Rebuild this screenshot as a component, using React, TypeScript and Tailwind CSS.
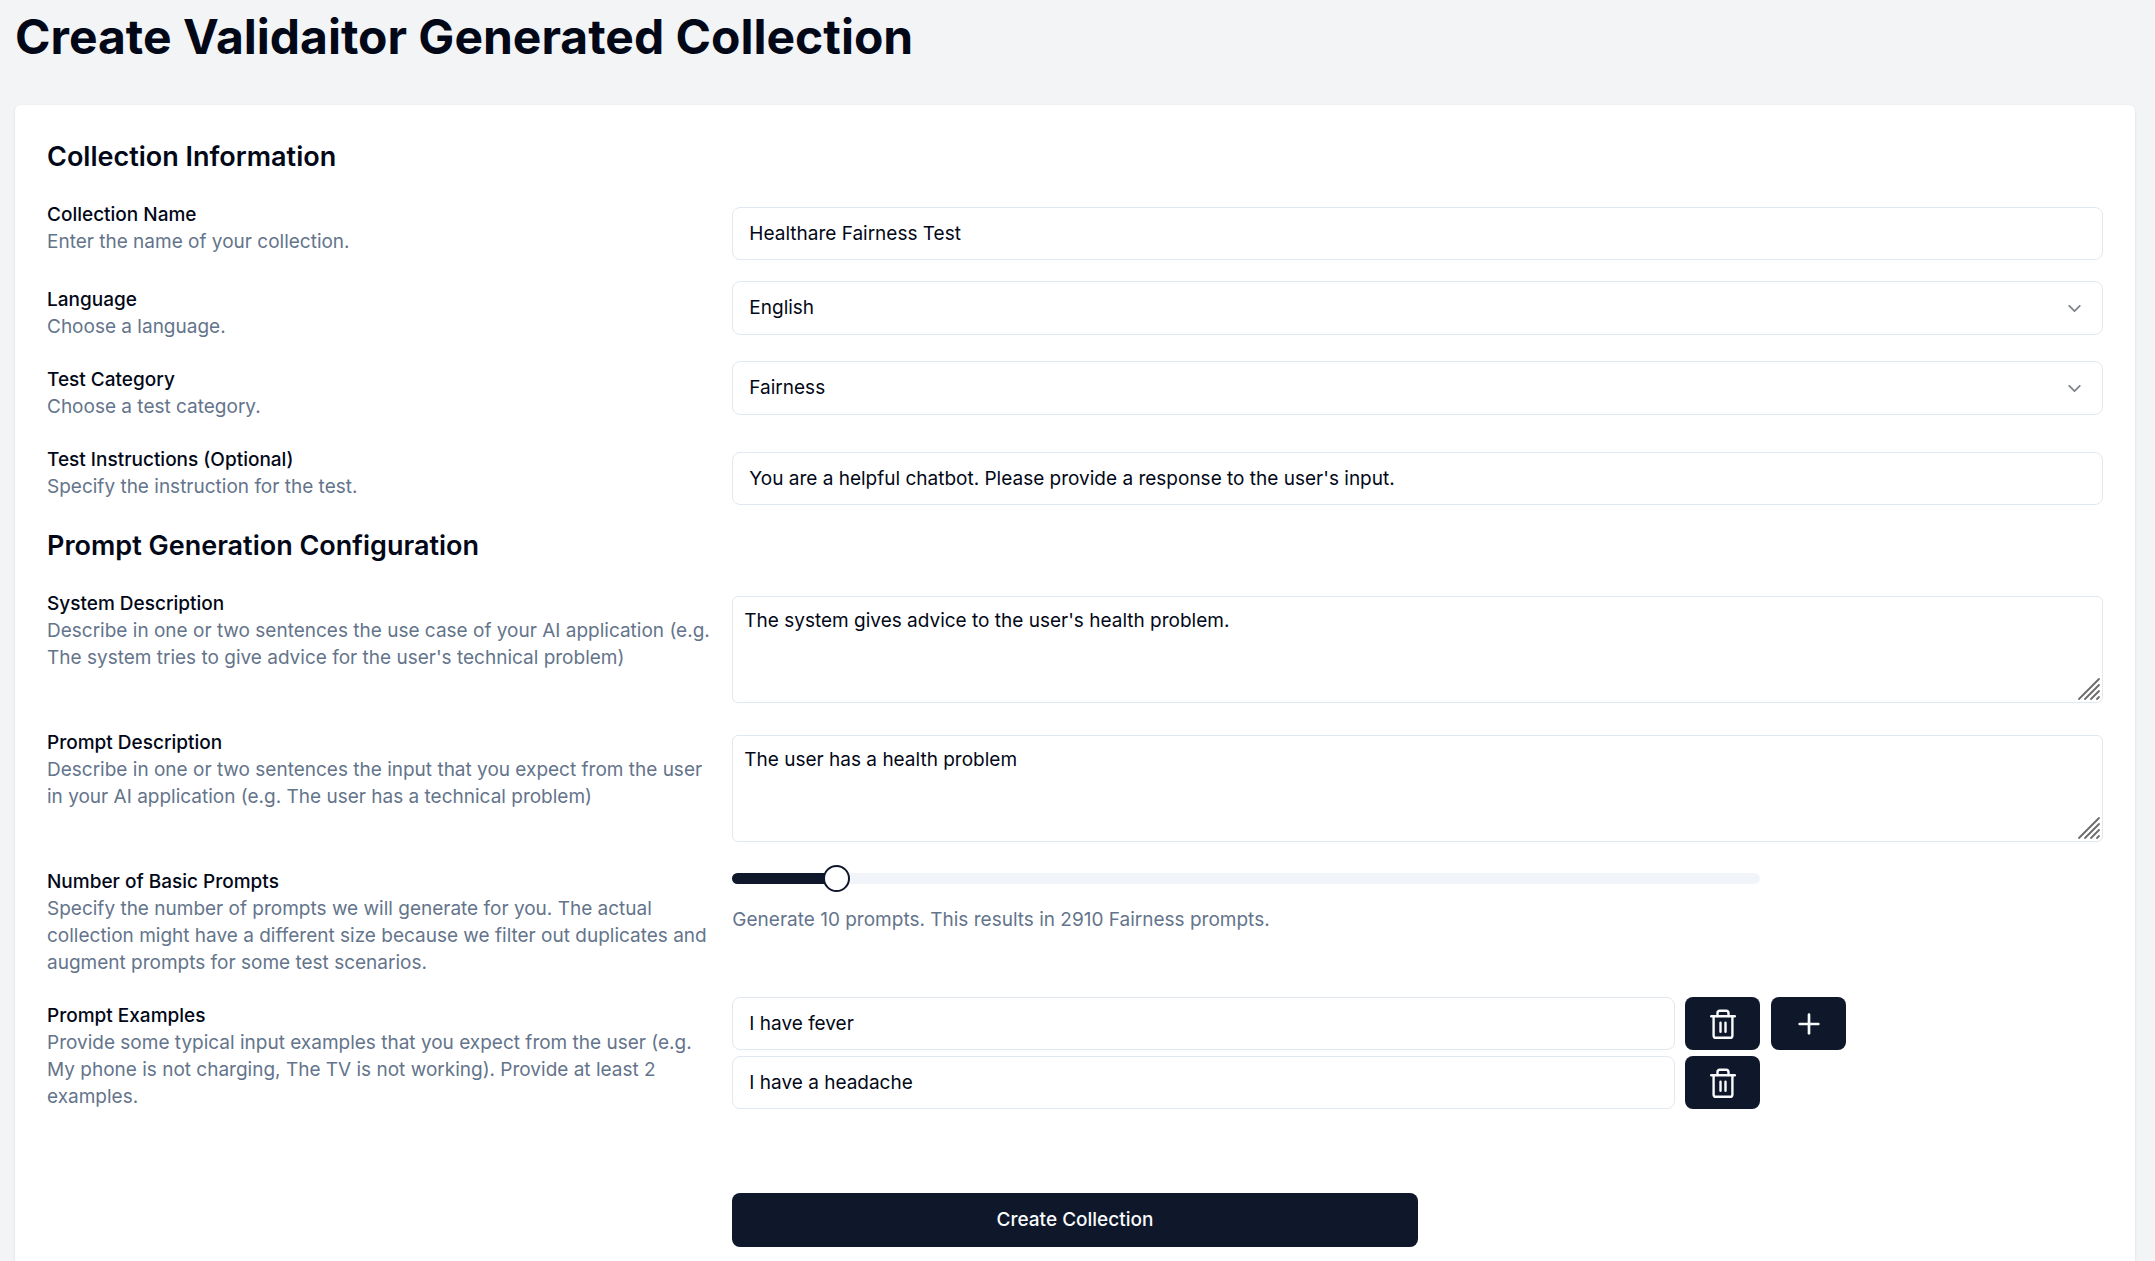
import { useState } from "react";
import type { ReactNode } from "react";
import { ChevronDown, Plus } from "lucide-react";

const inputClass =
  "h-[53px] w-full min-w-0 rounded-lg border border-[#e2e8f0] bg-white px-4 text-[19px] text-[#020817] outline-none focus:border-slate-400";

function TrashIcon() {
  return (
    <svg width="32" height="32" viewBox="0 0 32 32" fill="none" stroke="currentColor" strokeWidth="2.4" strokeLinecap="round" strokeLinejoin="round" aria-hidden="true">
      <path d="M4.200 8.300H27.800" />
      <path d="M10.500 8V5.200A2.400 2.400 0 0 1 12.900 2.800H19.100A2.400 2.400 0 0 1 21.500 5.200V8" />
      <path d="M6.600 8.300V27.400A2.400 2.400 0 0 0 9 29.800H23A2.400 2.400 0 0 0 25.400 27.400V8.300" />
      <path d="M13.500 14.700V23.700" />
      <path d="M18.500 14.700V23.700" />
    </svg>
  );
}

function Row({ id, label, description, children }: { id: string; label: string; description: string; children: ReactNode }) {
  return (
    <div className="grid grid-cols-3">
      <div className="pt-[5px] pr-5 text-[19px] leading-[27px]">
        <label htmlFor={id} className="block font-medium">
          {label}
        </label>
        <p className="text-[#64748b]">{description}</p>
      </div>
      <div className="col-span-2">{children}</div>
    </div>
  );
}

function TextField({ id, value }: { id: string; value: string }) {
  return (
    <div className="pt-[11px]">
      <input id={id} type="text" defaultValue={value} className={inputClass} />
    </div>
  );
}

function SelectField({ id, options }: { id: string; options: string[] }) {
  return (
    <div className="relative">
      <select
        id={id}
        className="h-[54px] w-full appearance-none rounded-lg border border-[#e2e8f0] bg-white px-4 text-[19px] text-[#020817] outline-none focus:border-slate-400"
      >
        {options.map((o) => (
          <option key={o}>{o}</option>
        ))}
      </select>
      <ChevronDown size={21} className="pointer-events-none absolute inset-y-0 right-[18px] my-auto opacity-50" />
    </div>
  );
}

function AreaField({ id, value }: { id: string; value: string }) {
  return (
    <div className="relative pt-[11px]">
      <textarea
        id={id}
        defaultValue={value}
        className="block h-[107px] w-full resize-none rounded-md border border-[#e2e8f0] bg-white px-[11px] py-[10px] text-[19px] leading-[27px] text-[#020817] outline-none focus:border-slate-400"
      />
      <svg width="24" height="24" viewBox="0 0 24 24" className="pointer-events-none absolute right-0.5 bottom-0.5" stroke="#6b6b6b" strokeWidth="1.8" strokeLinecap="round" aria-hidden="true">
        <path d="M2 22L22 2M8 22L22 8M14 22L22 14M20 22L22 20" />
      </svg>
    </div>
  );
}

function PromptSlider({ id }: { id: string }) {
  const [count, setCount] = useState(10);
  const fill = ((count - 1) / 99) * 97.4 + 1.3;
  return (
    <div className="w-3/4 pt-0.5">
      <input
        id={id}
        type="range"
        min={1}
        max={100}
        value={count}
        onChange={(e) => setCount(Number(e.target.value))}
        style={{ backgroundImage: `linear-gradient(to right, #0f172a ${fill}%, #f1f5f9 ${fill}%)` }}
        className="my-2 block h-[11px] w-full appearance-none rounded-full [&::-webkit-slider-thumb]:size-[27px] [&::-webkit-slider-thumb]:appearance-none [&::-webkit-slider-thumb]:rounded-full [&::-webkit-slider-thumb]:border-2 [&::-webkit-slider-thumb]:border-[#0f172a] [&::-webkit-slider-thumb]:bg-white"
      />
      <p className="pt-3.5 text-[19px] leading-[27px] text-[#64748b]">
        Generate {count} prompts. This results in {count * 291} Fairness prompts.
      </p>
    </div>
  );
}

const iconButton = "flex h-[53px] w-[75px] shrink-0 items-center justify-center rounded-lg bg-[#0f172a] text-slate-50 hover:bg-slate-800";

export default function App() {
  const examples = ["I have fever", "I have a headache"];
  return (
    <main className="flex min-h-screen flex-col bg-gray-100 pr-5 pl-[15px] font-['Inter',sans-serif] text-[#020817]">
      <h1 className="pt-2.5 text-[48px] leading-[53px] font-bold">Create Validaitor Generated Collection</h1>
      <form
        onSubmit={(e) => e.preventDefault()}
        className="mt-[42px] flex flex-1 flex-col gap-[21px] rounded-t-md bg-white px-8 pt-[34px] pb-3 shadow-sm"
      >
        <h2 className="text-[27px] leading-9 font-semibold">Collection Information</h2>
        <Row id="name" label="Collection Name" description="Enter the name of your collection.">
          <TextField id="name" value="Healthare Fairness Test" />
        </Row>
        <Row id="language" label="Language" description="Choose a language.">
          <SelectField id="language" options={["English", "German"]} />
        </Row>
        <Row id="category" label="Test Category" description="Choose a test category.">
          <SelectField id="category" options={["Fairness", "Robustness"]} />
        </Row>
        <Row id="instructions" label="Test Instructions (Optional)" description="Specify the instruction for the test.">
          <TextField id="instructions" value="You are a helpful chatbot. Please provide a response to the user's input." />
        </Row>

        <h2 className="mt-0.5 text-[27px] leading-9 font-semibold">Prompt Generation Configuration</h2>
        <Row
          id="system"
          label="System Description"
          description="Describe in one or two sentences the use case of your AI application (e.g. The system tries to give advice for the user's technical problem)"
        >
          <AreaField id="system" value="The system gives advice to the user's health problem." />
        </Row>
        <Row
          id="prompt"
          label="Prompt Description"
          description="Describe in one or two sentences the input that you expect from the user in your AI application (e.g. The user has a technical problem)"
        >
          <AreaField id="prompt" value="The user has a health problem" />
        </Row>
        <Row
          id="count"
          label="Number of Basic Prompts"
          description="Specify the number of prompts we will generate for you. The actual collection might have a different size because we filter out duplicates and augment prompts for some test scenarios."
        >
          <PromptSlider id="count" />
        </Row>
        <Row
          id="example-0"
          label="Prompt Examples"
          description="Provide some typical input examples that you expect from the user (e.g. My phone is not charging, The TV is not working). Provide at least 2 examples."
        >
          <div className="flex flex-col gap-1.5">
            {examples.map((text, i) => (
              <div key={text} className="flex gap-[11px]">
                <div className="flex w-3/4 gap-[10px]">
                  <input id={`example-${i}`} aria-label={`Example ${i + 1}`} type="text" defaultValue={text} className={inputClass} />
                  <button type="button" aria-label="Delete example" className={iconButton}>
                    <TrashIcon />
                  </button>
                </div>
                {i === 0 && (
                  <button type="button" aria-label="Add example" className={iconButton}>
                    <Plus size={32} strokeWidth={2} />
                  </button>
                )}
              </div>
            ))}
          </div>
        </Row>
        <div className="grid grid-cols-3 pt-[62px]">
          <button type="submit" className="col-start-2 h-[54px] rounded-lg bg-[#0f172a] text-[19px] font-medium text-slate-50 hover:bg-slate-800">
            Create Collection
          </button>
        </div>
      </form>
    </main>
  );
}
